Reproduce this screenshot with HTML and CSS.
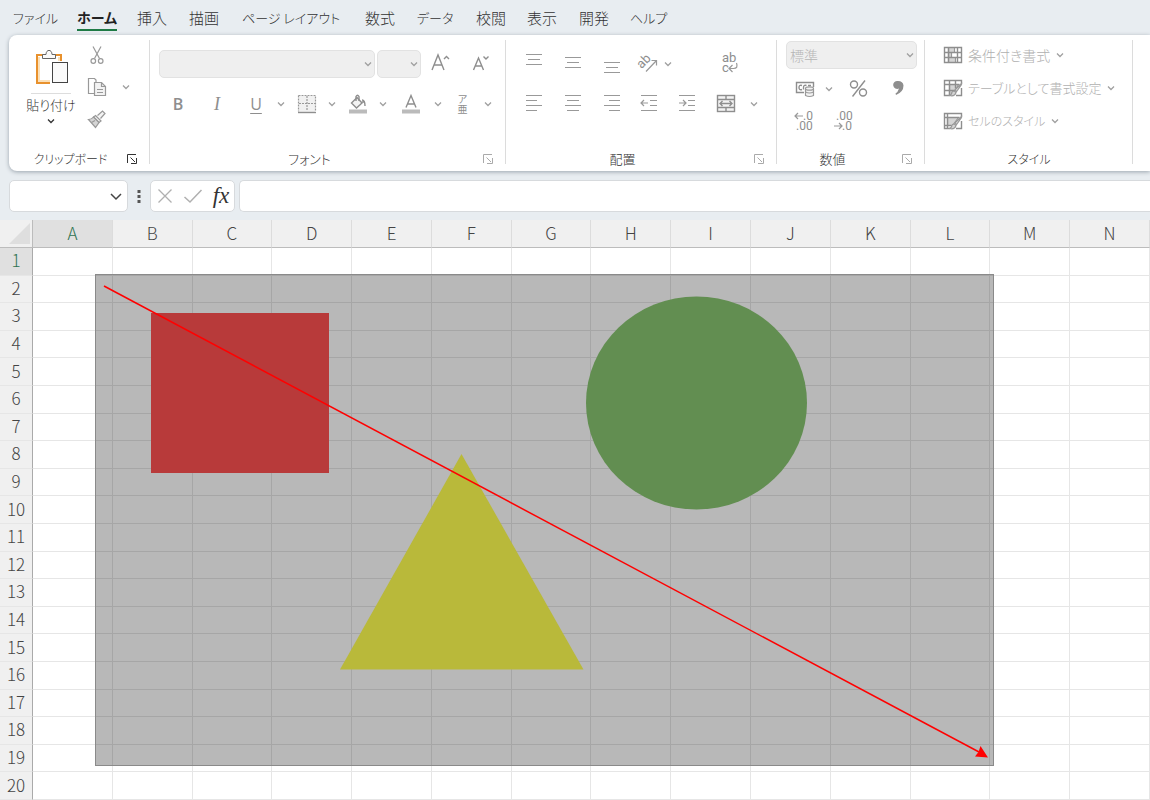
FILE: index.html
```html
<!DOCTYPE html>
<html lang="ja">
<head>
<meta charset="utf-8">
<meta name="viewport" content="width=device-width, initial-scale=1">
<title>ワークシート</title>
<link rel="stylesheet" href="styles.css">
</head>
<body>
<svg class="defs" aria-hidden="true">
  <symbol id="chev" viewBox="0 0 10 10"><path d="M2 3.500 5 6.500 8 3.500"/></symbol>
  <symbol id="launch" viewBox="0 0 10 10"><path d="M.5 9V.5H9M3.500 3.500 8 8M9.500 4v5.500H4"/></symbol>
</svg>
<div class="app">
  <nav class="tabs">
    <button class="tab kana">ファイル</button>
    <button class="tab kana active"><span>ホーム</span></button>
    <button class="tab">挿入</button>
    <button class="tab">描画</button>
    <button class="tab kana">ページ レイアウト</button>
    <button class="tab">数式</button>
    <button class="tab kana">データ</button>
    <button class="tab">校閲</button>
    <button class="tab">表示</button>
    <button class="tab">開発</button>
    <button class="tab kana">ヘルプ</button>
  </nav>

  <div class="ribbon">
    <section class="group clipboard">
      <div class="clip-body">
        <button class="paste">
          <svg width="34" height="38" viewBox="0 0 34 38">
            <path d="M10 5H3v28H16" fill="none" stroke="#e8912d" stroke-width="2"/>
            <path d="M19 5h8v6" fill="none" stroke="#e8912d" stroke-width="2"/>
            <path d="M5 7v24h11M25 7v4" fill="none" stroke="#fbe0b8" stroke-width="2"/>
            <path d="M8.500 8.500V4.500h3.500C12 -1 18 -1 18 4.500h3.500v4z" fill="#fafafa" stroke="#666"/>
            <rect x="18.500" y="12.500" width="15" height="20" fill="#fafafa" stroke="#444"/>
          </svg>
          <span class="paste-text">貼り付け</span>
          <svg class="chev dark" width="10" height="10"><use href="#chev"/></svg>
        </button>
        <div class="clip-tools">
          <button aria-label="切り取り"><svg class="ico" width="20" height="20" viewBox="0 0 20 20"><path d="M6 1.500l6.500 12M14 1.500l-6.500 12"/><circle cx="6.300" cy="16" r="2.300"/><circle cx="13.700" cy="16" r="2.300"/></svg></button>
          <button aria-label="コピー"><svg class="ico" width="20" height="20" viewBox="0 0 20 20"><path d="M7 16.500H1.500v-15h6L9 3v2"/><path class="soft" d="M7.500 5.500h7l4 4v9h-11z"/><path d="M14.500 5.500v4h4M10 12.500h6M10 15.500h6"/></svg></button>
          <button aria-label="コピーのオプション"><svg class="chev" width="10" height="10"><use href="#chev"/></svg></button>
          <button class="brush" aria-label="書式のコピー"><svg class="ico" width="20" height="20" viewBox="0 0 20 20"><path class="soft" d="M10.500 6.500 15.500 2l2.500 2.500-4.500 5"/><path class="soft" d="M8.500 6.500 14 12l-2 1.500L6.500 8z"/><path class="mid" d="M6.500 8 12 13.500 8.500 18.500 1.500 10.500q3 0 5-2.500z"/><path d="M4.500 13.500 8 11.500"/></svg></button>
        </div>
      </div>
      <footer><span class="kana">クリップボード</span><button class="launch dark" aria-label="クリップボードの設定"><svg width="10" height="10"><use href="#launch"/></svg></button></footer>
    </section>

    <section class="group font">
      <div class="row font-one">
        <div class="pick"><select aria-label="フォント"><option></option></select><svg class="chev" width="10" height="10"><use href="#chev"/></svg></div>
        <div class="pick"><select aria-label="サイズ"><option></option></select><svg class="chev" width="10" height="10"><use href="#chev"/></svg></div>
        <button aria-label="拡大"><svg class="ico" width="20" height="20" viewBox="0 0 20 20"><path class="thick" d="M1 16 7 1 13 16M3 11h8"/><path class="thick" d="M13 5 15.500 2.500 18 5"/></svg></button>
        <button aria-label="縮小"><svg class="ico" width="20" height="20" viewBox="0 0 20 20"><path class="thick" d="M1.500 16 6.500 4 11.500 16M3 12h7"/><path class="thick" d="M11.500 2.500 14 5 16.500 2.500"/></svg></button>
      </div>
      <div class="row font-two">
        <button class="letter bold">B</button>
        <button class="letter italic">I</button>
        <button class="letter under">U</button>
        <button aria-label="下線の種類"><svg class="chev" width="10" height="10"><use href="#chev"/></svg></button>
        <button aria-label="罫線"><svg class="ico" width="20" height="20" viewBox="0 0 20 20"><rect x="2" y="2" width="16" height="16" fill="#f1f1f1" stroke="none"/><path stroke-dasharray="2 1" d="M1.500 1.500h17v16M1.500 1.500v16M10 2v15M2 9.500h16"/><path class="thick" d="M1 18.500h18"/></svg></button>
        <button aria-label="罫線の種類"><svg class="chev" width="10" height="10"><use href="#chev"/></svg></button>
        <button aria-label="塗りつぶし"><svg class="ico" width="20" height="20" viewBox="0 0 20 20"><path class="soft thick" d="M9 3.500 14 9 8.500 14 3.500 9z"/><path class="thick" d="M8 7V2.500q1.500-2.500 3 0V7"/><path class="thick" d="M14 6q3 0 3 6M14 8h3"/><path d="M1 17.500h18" stroke="#bbb" stroke-width="4"/></svg></button>
        <button aria-label="塗りつぶしの色"><svg class="chev" width="10" height="10"><use href="#chev"/></svg></button>
        <button aria-label="フォントの色"><svg class="ico" width="20" height="20" viewBox="0 0 20 20"><path class="thick" d="M5 13.500 10 1.500 15 13.500M6.500 10h7"/><path d="M1 17.500h18" stroke="#bbb" stroke-width="4"/></svg></button>
        <button aria-label="文字色の選択"><svg class="chev" width="10" height="10"><use href="#chev"/></svg></button>
        <button class="ruby"><span>ア</span><span>亜</span></button>
        <button aria-label="ふりがなの設定"><svg class="chev" width="10" height="10"><use href="#chev"/></svg></button>
      </div>
      <footer><span>フォント</span><button class="launch" aria-label="フォントの設定"><svg width="10" height="10"><use href="#launch"/></svg></button></footer>
    </section>

    <section class="group align">
      <div class="row align-one">
        <button aria-label="上揃え"><svg class="ico" width="18" height="20" viewBox="0 0 18 20"><path d="M1 .5h16M3 5.500h12M1 10.500h16"/></svg></button>
        <button aria-label="上下中央揃え"><svg class="ico" width="18" height="20" viewBox="0 0 18 20"><path d="M1 3.500h16M3 8.500h12M1 13.500h16"/></svg></button>
        <button aria-label="下揃え"><svg class="ico" width="18" height="20" viewBox="0 0 18 20"><path d="M1 8.500h16M3 13.500h12M1 18.500h16"/></svg></button>
        <button aria-label="方向"><svg class="ico" width="20" height="20" viewBox="0 0 20 20"><text x="1" y="13" transform="rotate(-45 5 11)" class="tiny-ab">ab</text><path d="M8 17.500 18.500 6.500M13.500 6.500h5v5"/></svg></button>
        <button aria-label="方向の種類"><svg class="chev" width="10" height="10"><use href="#chev"/></svg></button>
        <button class="wrap" aria-label="折り返し"><svg class="ico" width="20" height="22" viewBox="0 0 20 22"><text x="3" y="9" class="tiny-ab">ab</text><text x="3" y="19" class="tiny-ab">c</text><path d="M17.500 10q2 5.500-3 5.500H10M13.500 12 10 15.500l3.500 3.500"/></svg></button>
      </div>
      <div class="row align-two">
        <button aria-label="左揃え"><svg class="ico" width="18" height="18" viewBox="0 0 18 18"><path d="M1 .5h16M1 5.500h11M1 10.500h16M1 15.500h11"/></svg></button>
        <button aria-label="中央揃え"><svg class="ico" width="18" height="18" viewBox="0 0 18 18"><path d="M1 .5h16M3 5.500h12M1 10.500h16M3 15.500h12"/></svg></button>
        <button aria-label="右揃え"><svg class="ico" width="18" height="18" viewBox="0 0 18 18"><path d="M1 .5h16M6 5.500h11M1 10.500h16M6 15.500h11"/></svg></button>
        <button aria-label="インデントを減らす"><svg class="ico" width="18" height="18" viewBox="0 0 18 18"><path d="M1 .5h16M10 5.500h7M10 10.500h7M1 15.500h16M8 8H1.500M4 5 1 8l3 3"/></svg></button>
        <button aria-label="インデントを増やす"><svg class="ico" width="18" height="18" viewBox="0 0 18 18"><path d="M1 .5h16M10 5.500h7M10 10.500h7M1 15.500h16M1 8h6.500M5 5l3 3-3 3"/></svg></button>
        <button aria-label="セルを結合"><svg class="ico" width="20" height="20" viewBox="0 0 20 20"><rect class="soft thick" x="1.500" y="1.500" width="17" height="16"/><path class="thick" d="M1.500 5.500h17M1.500 13.500h17M10 1.500v4M10 13.500v4M4 9.500h12M6.500 7 4 9.500l2.500 2.500M13.500 7 16 9.500l-2.500 2.500"/></svg></button>
        <button aria-label="結合の種類"><svg class="chev" width="10" height="10"><use href="#chev"/></svg></button>
      </div>
      <footer><span>配置</span><button class="launch" aria-label="配置の設定"><svg width="10" height="10"><use href="#launch"/></svg></button></footer>
    </section>

    <section class="group number">
      <div class="pick"><select aria-label="表示形式"><option>標準</option></select><svg class="chev" width="10" height="10"><use href="#chev"/></svg></div>
      <div class="row num-one">
        <button aria-label="通貨"><svg class="ico" width="20" height="18" viewBox="0 0 20 18"><path class="thick" d="M9 12.500H1.500v-10h17V7"/><path class="thick" d="M7 5.500q-3-1-3 2t3 2M11.500 5.500q-3-1-3 2v2M16 5.500h-3"/><path class="soft" d="M10.500 9v6.500q4 2 8 0V9"/><ellipse class="soft" cx="14.500" cy="8.500" rx="4" ry="1.700"/><path d="M10.500 12q4 2 8 0"/></svg></button>
        <button aria-label="通貨の種類"><svg class="chev" width="10" height="10"><use href="#chev"/></svg></button>
        <button aria-label="パーセント"><svg class="ico" width="20" height="20" viewBox="0 0 20 20"><g class="thick"><circle cx="6" cy="5.500" r="3.500"/><circle cx="15" cy="13.500" r="3.500"/><path d="M17 1.500 4.500 17.500"/></g></svg></button>
        <button aria-label="桁区切り"><svg width="12" height="18" viewBox="0 0 12 18"><path fill="#8e8e8e" d="M6 1a4 4 0 1 0 1 7.500Q6 12 3.500 13.500l.5 1.500Q11.500 12 11.500 5.500 11 1 6 1z"/></svg></button>
      </div>
      <div class="row num-two">
        <button aria-label="小数点を増やす"><svg class="ico" width="22" height="22" viewBox="0 0 22 22"><path d="M9 6H1M4 3 1 6l3 3"/><text x="9" y="10" class="digits">.0</text><text x="2" y="20" class="digits">.00</text></svg></button>
        <button aria-label="小数点を減らす"><svg class="ico" width="22" height="22" viewBox="0 0 22 22"><text x="3" y="10" class="digits">.00</text><path d="M1 16h8M6 13l3 3-3 3"/><text x="9" y="20" class="digits">.0</text></svg></button>
      </div>
      <footer><span>数値</span><button class="launch" aria-label="数値の設定"><svg width="10" height="10"><use href="#launch"/></svg></button></footer>
    </section>

    <section class="group styles">
      <button class="style-item"><svg class="ico" width="20" height="18" viewBox="0 0 20 18"><path class="mid" d="M5.500 1.500h6v5h-6zM5.500 6.500h3v5h-3zM5.500 11.500h7v5h-7z"/><path class="thick" d="M1.500 1.500h17v15h-17zM1.500 6.500h17M1.500 11.500h17M5.500 1.500v15M14.500 1.500v15"/></svg><span>条件付き書式</span><svg class="chev" width="10" height="10"><use href="#chev"/></svg></button>
      <button class="style-item"><svg class="ico" width="20" height="18" viewBox="0 0 20 18"><path class="mid" d="M6.500 5.500h9l-6 11h-3z"/><path class="thick" d="M7 16.500H1.500v-15h17V5M1.500 5.500h15M1.500 11.500H12M6.500 1.500v15M12.500 1.500v8M18.500 9v7.500H13"/><path class="soft" d="M18.500 4.500 12 11l1.500 1.500 5-7z"/><path class="mid" d="M11.500 12q-3 0-3 3l-2 1.500q5 1.500 6.500-3z"/></svg><span class="mixed">テーブルとして書式設定</span><svg class="chev" width="10" height="10"><use href="#chev"/></svg></button>
      <button class="style-item"><svg class="ico" width="20" height="18" viewBox="0 0 20 18"><path class="mid" d="M4.500 5.500h11l-6 8h-5z"/><path class="thick" d="M7 16.500H1.500v-15h17V5M1.500 5.500h15M4.500 1.500v15M1.500 13.500H8M18.500 9v7.500H13"/><path class="soft" d="M18.500 4.500 12 11l1.500 1.500 5-7z"/><path class="mid" d="M11.500 12q-3 0-3 3l-2 1.500q5 1.500 6.500-3z"/></svg><span class="kana">セルのスタイル</span><svg class="chev" width="10" height="10"><use href="#chev"/></svg></button>
      <footer><span class="kana">スタイル</span></footer>
    </section>
  </div>

  <div class="formula-bar">
    <div class="name-box"><input aria-label="名前ボックス"><button aria-label="名前の一覧"><svg width="14" height="10" viewBox="0 0 14 10"><path d="M2 3 7 8 12 3" fill="none" stroke="#444" stroke-width="1.500"/></svg></button></div>
    <svg class="dots" width="4" height="14" viewBox="0 0 4 14"><path d="M.5 1h3v3h-3zM.5 6h3v3h-3zM.5 11h3v3h-3z" fill="#555"/></svg>
    <div class="fx-box">
      <button aria-label="キャンセル"><svg width="16" height="16" viewBox="0 0 16 16"><path d="M1.500 1.500l13 13M14.500 1.500l-13 13" fill="none" stroke="#b0b0b0" stroke-width="1.300"/></svg></button>
      <button aria-label="入力"><svg width="20" height="16" viewBox="0 0 20 16"><path d="M1.500 9 7 14 18.500 2" fill="none" stroke="#b0b0b0" stroke-width="1.500"/></svg></button>
      <button class="fx">fx</button>
    </div>
    <input class="formula" aria-label="数式バー">
  </div>

  <main class="sheet">
    <table>
      <thead><tr><th class="corner"><svg width="22" height="22" viewBox="0 0 22 22"><path d="M22 1v21H1z" fill="#dedede"/></svg></th><th class="on">A</th><th>B</th><th>C</th><th>D</th><th>E</th><th>F</th><th>G</th><th>H</th><th>I</th><th>J</th><th>K</th><th>L</th><th>M</th><th>N</th></tr></thead>
      <tbody id="rows"></tbody>
    </table>
    <svg class="drawing" width="899" height="493" viewBox="0 0 899 493">
      <rect x=".5" y=".5" width="898" height="491" fill="#000" fill-opacity=".28" stroke="#8a8a8a"/>
      <rect x="56" y="39" width="178" height="160" fill="#b83a3a"/>
      <ellipse cx="601.500" cy="129" rx="110.500" ry="106.500" fill="#628e51"/>
      <path d="M366.500 180 488.500 395.500H245z" fill="#b9b93a"/>
      <path d="M9 12 884 478" stroke="#f00" stroke-width="1.500"/>
      <path d="M893 483.500 880 482.500 883.500 478 885.500 472z" fill="#f00"/>
    </svg>
  </main>
</div>
<script src="sheet.js"></script>
</body>
</html>
```
FILE: styles.css
```css
* { box-sizing: border-box; }
body { margin: 0; font-family: "Noto Sans CJK JP", sans-serif; font-weight: 300; font-size: 14px; color: #333; font-feature-settings: "palt"; }
button, input, select { font: inherit; font-feature-settings: inherit; color: inherit; background: none; border: 0; padding: 0; margin: 0; }
svg { display: block; flex: none; }
.defs { position: absolute; width: 0; height: 0; }
.app { display: flex; flex-direction: column; height: 100vh; background: #e8edf1; overflow: hidden; }

.tabs { display: grid; grid-template-columns: 64px 60px 52px 53px 123px 52px 59px 51px 52px 51px 60px; height: 35px; padding-left: 13px; }
.tab { font-size: 15px; line-height: 35px; text-align: left; white-space: nowrap; }
.tab.kana { font-size: 13px; }
.tab.active { font-size: 14px; font-weight: 700; color: #222; }
.tab.active span { display: inline-block; line-height: 24px; width: 40px; border-bottom: 2px solid #1e7a45; }

.ribbon { display: flex; flex: none; height: 136px; margin-left: 9px; background: #fff; border-radius: 8px 0 0 8px; box-shadow: 0 1px 4px #9aa4ad; }
.group { position: relative; display: flex; flex-direction: column; flex: none; padding: 15px 8px 0; }
.group::after { content: ""; position: absolute; right: 0; top: 5px; bottom: 7px; width: 1px; background: #dcdcdc; }
.group footer { display: flex; justify-content: center; margin-top: auto; height: 24px; line-height: 24px; font-size: 13px; }
.group .kana { font-size: 12px; }
.launch { position: absolute; right: 13px; bottom: 7px; stroke: #aaa; fill: none; }
.launch.dark { stroke: #333; }
.clipboard { width: 141px; }
.clipboard footer { padding-right: 18px; }
.font { width: 356px; padding-left: 9px; }
.font footer { padding-right: 38px; }
.align { width: 271px; }
.align footer { padding-right: 38px; }
.number { width: 148px; padding-top: 6px; padding-left: 9px; }
.number footer { padding-right: 38px; }
.styles { width: 208px; padding-top: 3px; }

.row { display: grid; align-items: center; }
.row button, .clip-tools button { display: flex; align-items: center; justify-content: center; }
.chev { fill: none; stroke: #a0a0a0; stroke-width: 1.3; }
.chev.dark { stroke: #333; }
.ico { fill: none; stroke: #999; stroke-width: 1.2; overflow: visible; }
.ico .soft { fill: #f3f3f3; }
.ico .mid { fill: #d5d5d5; }
.ico .thick { stroke-width: 1.4; stroke: #8e8e8e; }
.ico text { fill: #8e8e8e; stroke: none; font-weight: 400; font-family: Roboto, sans-serif; }
.ico .tiny-ab { font-size: 13px; }
.ico .digits { font-size: 12px; }

.clip-body { display: flex; }
.paste { display: flex; flex-direction: column; align-items: center; width: 72px; }
.paste-text { border-top: 1px solid #ddd; margin-top: 5px; line-height: 22px; width: 40px; white-space: nowrap; font-size: 13px; display: flex; justify-content: center; }
.clip-tools { display: grid; grid-template-columns: 24px 33px; grid-template-rows: 20px 44px 20px; align-items: center; margin-top: -5px; }
.clip-tools button:first-child { grid-column: 1 / 2; }
.clip-tools button:nth-child(2) { grid-column: 1; }
.clip-tools .brush { grid-column: 1; }

.pick { position: relative; height: 28px; }
.pick select { appearance: none; width: 100%; height: 100%; padding: 0 3px; background: #efefef; border: 1px solid #e2e2e2; border-radius: 5px; color: #b5b5b5; opacity: 1; }
.pick .chev { position: absolute; right: 2px; top: 9px; }
.font-one { grid-template-columns: 216px 44px 36px 41px; column-gap: 2px; height: 28px; }
.font-two { grid-template-columns: 38px 40px 38px 12px 39px 12px 40px 10px 46px 8px 41px 10px; height: 28px; margin-top: 12px; }
.letter { font-size: 16px; color: #8e8e8e; font-family: "Open Sans", sans-serif; }
.letter.bold { font-weight: 600; }
.letter.italic { font-family: "Liberation Serif", serif; font-style: italic; font-size: 18px; }
.letter.under { font-weight: 400; text-decoration: underline; text-underline-offset: 3px; }
.row .ruby { flex-direction: column; font-size: 10px; line-height: 10px; color: #8e8e8e; font-weight: 400; }
.align-one { grid-template-columns: 40px 38px 40px 32px 8px 38px; height: 28px; }
.align-one .wrap { margin-left: 38px; width: 38px; }
.align-two { grid-template-columns: 40px 38px 40px 34px 42px 36px 20px; height: 28px; margin-top: 12px; }
.num-one { grid-template-columns: 38px 10px 48px 32px; height: 36px; margin-top: 2px; }
.num-two { grid-template-columns: 38px 40px; height: 28px; }

.style-item { display: flex; align-items: center; gap: 5px; height: 33px; padding-left: 10px; color: #b0b0b0; white-space: nowrap; font-size: 14px; }
.mixed { font-size: 13px; }

.formula-bar { display: flex; align-items: center; flex: none; height: 49px; padding: 1px 0 0 9px; }
.name-box, .fx-box, .formula { height: 32px; background: #fff; border: 1px solid #d7dadd; border-radius: 5px; }
.name-box { display: flex; align-items: center; width: 119px; padding-right: 4px; }
.name-box input { flex: 1; min-width: 0; }
.dots { margin: 0 9px; }
.fx-box { display: grid; grid-template-columns: 28px 28px 28px; align-items: center; width: 85px; }
.fx-box button { display: flex; justify-content: center; }
.fx-box .fx { font-family: "Liberation Serif", serif; font-style: italic; font-weight: 400; font-size: 23px; line-height: 20px; }
.formula { flex: 1; margin-left: 4px; border-right: 0; border-radius: 5px 0 0 5px; padding: 0 8px; }

.sheet { position: relative; flex: 1; min-height: 0; background: #fff; }
table { width: 100%; height: 100%; table-layout: fixed; border-collapse: separate; border-spacing: 0; }
th { height: 27px; padding: 0 0 2px; font-size: 17px; line-height: 20px; font-weight: 300; color: #444; background: #f0f0f0; text-align: center; }
thead th { height: 28px; border-bottom: 1px solid #bcbcbc; border-right: 1px solid #dcdcdc; }
tbody th { border-right: 1px solid #aaa; border-bottom: 1px solid #e6e6e6; }
thead .corner { width: 33px; border-right-color: #bcbcbc; }
.corner svg { margin-left: 8px; }
th.on { background: #e0e0e0; color: #2f7350; }
td { padding: 0; border-right: 1px solid #e6e6e6; border-bottom: 1px solid #e6e6e6; }
.drawing { position: absolute; left: 95px; top: 54px; }
```
FILE: sheet.js
```js
const body = document.getElementById('rows');
for (let r = 1; r <= 20; r++) {
  const tr = body.insertRow();
  const th = document.createElement('th');
  th.textContent = r;
  if (r === 1) th.className = 'on';
  tr.append(th);
  for (let c = 0; c < 14; c++) tr.insertCell();
}
```
